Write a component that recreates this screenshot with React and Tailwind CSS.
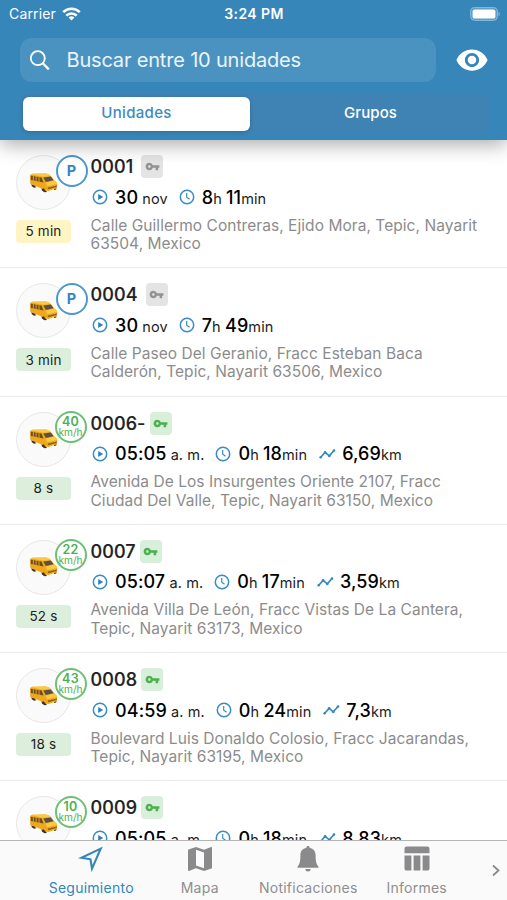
import {
  MdVpnKey,
  MdMap,
  MdVisibility,
} from "react-icons/md";

const units = [
  {
    name: "0001",
    age: "5 min",
    stale: true,
    start: ["30", " nov"],
    hours: "8",
    minutes: "11",
    address: ["Calle Guillermo Contreras, Ejido Mora, Tepic, Nayarit", "63504, Mexico"],
  },
  {
    name: "0004",
    age: "3 min",
    start: ["30", " nov"],
    hours: "7",
    minutes: "49",
    address: ["Calle Paseo Del Geranio, Fracc Esteban Baca", "Calderón, Tepic, Nayarit 63506, Mexico"],
  },
  {
    name: "0006-",
    age: "8 s",
    speed: 40,
    start: ["05:05", " a. m."],
    hours: "0",
    minutes: "18",
    distance: "6,69",
    address: ["Avenida De Los Insurgentes Oriente 2107, Fracc", "Ciudad Del Valle, Tepic, Nayarit 63150, Mexico"],
  },
  {
    name: "0007",
    age: "52 s",
    speed: 22,
    start: ["05:07", " a. m."],
    hours: "0",
    minutes: "17",
    distance: "3,59",
    address: ["Avenida Villa De León, Fracc Vistas De La Cantera,", "Tepic, Nayarit 63173, Mexico"],
  },
  {
    name: "0008",
    age: "18 s",
    speed: 43,
    start: ["04:59", " a. m."],
    hours: "0",
    minutes: "24",
    distance: "7,3",
    address: ["Boulevard Luis Donaldo Colosio, Fracc Jacarandas,", "Tepic, Nayarit 63195, Mexico"],
  },
  {
    name: "0009",
    speed: 10,
    start: ["05:05", " a. m."],
    hours: "0",
    minutes: "18",
    distance: "8,83",
  },
];

function WifiIcon() {
  return (
    <svg width="19" height="14" viewBox="0 0 19 14" fill="none" stroke="white" strokeWidth="2.6">
      <path d="M1.2 5.2a11.8 11.8 0 0 1 16.6 0" />
      <path d="M4.3 8.6a7.4 7.4 0 0 1 10.4 0" />
      <path d="M9.5 13.6 6.6 10.6a4.2 4.2 0 0 1 5.8 0z" fill="white" stroke="none" />
    </svg>
  );
}

function BatteryIcon() {
  return (
    <svg width="31" height="14" viewBox="0 0 31 14" fill="none">
      <rect x="0.6" y="0.6" width="26.8" height="12.8" rx="4" fill="#5a9dc8" stroke="#8bbbd9" />
      <rect x="2.6" y="2.4" width="22.8" height="9.2" rx="2.2" fill="white" />
      <path d="M28.6 4.8v4.4c1.6-.8 1.6-3.6 0-4.4z" fill="#8bbbd9" />
    </svg>
  );
}

function SearchIcon() {
  return (
    <svg width="21" height="21" viewBox="0 0 21 21" fill="none" stroke="white" strokeWidth="1.8">
      <circle cx="8.8" cy="8.2" r="7" />
      <path d="M13.8 13.2 19.8 19.4" strokeWidth="2.3" />
    </svg>
  );
}

function VanIcon() {
  return (
    <svg width="30" height="22" viewBox="0 0 30 22">
      <path d="M2.4 12l4 1.4.4 2-1.600.3-2.400-1.500zM12.500 16l4 1.500 1.400 2.400-2.200.4-2.800-1.900zM25 16l2.600-.8-.4 2.400-2 .5z" fill="#3b3129" />
      <path d="M1 3.600Q1.200 2 3.200 1.700L17 1.500Q20.500 1.900 22.800 5L25.200 8.300Q28 9.800 28.200 12L27.800 16.200 19.500 19 14.800 18.200 12.800 16.600 6.300 14.100 1.200 11.700z" fill="#f0a91c" />
      <path d="M2.200 2.300Q2.600 1.800 4 1.700L17 1.500Q19.800 1.700 21.800 4L13.800 4.800z" fill="#fbc83f" />
      <path d="M16.700 10.400 25.300 8.600Q28 10 28.100 12L18.200 14.200z" fill="#fdca3a" />
      <path d="M1.900 3.700 12.600 5.400 14.500 10.600 1.900 8z" fill="#6b4d22" />
      <path d="M14.300 5.500 21.800 4.600 24.500 8.200 16.800 9.900z" fill="#5a5048" />
      <path d="M4.300 3.500v5.400M7.100 4v5.600M10 4.400v5.800" stroke="#e6a11e" strokeWidth="1" />
      <path d="M18.800 15.600 27.800 13.500v1.500L19 17.200z" fill="#8d6420" />
      <path d="M13.700 16.200q1.700-.2 2.200 1.800l-.3 1.800q-1.500 0-2.200-1.800z" fill="#3b3129" />
    </svg>
  );
}

function PlayIcon() {
  return (
    <svg className="mr-[7px] shrink-0" width="16" height="16" viewBox="0 0 16 16" fill="none">
      <circle cx="8" cy="8" r="6.700" stroke="#3a8cc4" strokeWidth="1.5" />
      <path d="M6.200 4.900v6.200L11.200 8z" fill="#2f80bb" />
    </svg>
  );
}

function ClockIcon() {
  return (
    <svg className="mr-[7px] shrink-0" width="16" height="16" viewBox="0 0 16 16" fill="none" stroke="#3a8cc4">
      <circle cx="8" cy="8" r="6.700" strokeWidth="1.5" />
      <path d="M7.700 4.100v4.200l2.900 2" strokeWidth="1.200" />
    </svg>
  );
}

function TrendIcon() {
  return (
    <svg className="mr-[6px] shrink-0" width="17" height="12" viewBox="0 0 17 12" fill="#3486c0">
      <path d="M1.700 9.300 6.100 4.400 10.300 7.900 15 2.500" fill="none" stroke="#3486c0" strokeWidth="1.600" />
      <circle cx="1.700" cy="9.300" r="1.300" />
      <circle cx="6.100" cy="4.300" r="1.300" />
      <circle cx="10.300" cy="8" r="1.300" />
      <circle cx="15" cy="2.500" r="1.300" />
    </svg>
  );
}

function SendIcon() {
  return (
    <svg width="26" height="26" viewBox="0 0 26 26" fill="none" stroke="#3486ba" strokeWidth="2.100">
      <path d="M22.700 2.600 3.400 11.800l9.100 1.500 1.500 9.300z" />
    </svg>
  );
}

function BellIcon() {
  return (
    <svg width="26" height="26" viewBox="0 0 26 26" fill="#8a8a8d">
      <path d="M13 0c1 0 1.500.7 1.600 1.700 3.800.8 6 3.600 6 7.500 0 5 .4 8.900 2.900 11.500v1H2.500v-1c2.500-2.600 2.900-6.500 2.900-11.500 0-3.900 2.200-6.700 6-7.500C11.500.7 12 0 13 0z" />
      <path d="M10.400 22.900h5.200a2.600 2.500 0 0 1-5.200 0z" />
    </svg>
  );
}

function TableIcon() {
  return (
    <svg width="26" height="26" viewBox="0 0 26 26" fill="#8a8a8d">
      <path d="M2.700.6h20.600q2.200 0 2.200 2.200v4.400H.5V2.800Q.5.600 2.700.6zM.5 9.600h6.900v15H2.700q-2.200 0-2.200-2.200zM9.600 9.600h6.800v15H9.600zM18.600 9.600h6.900v12.800q0 2.200-2.200 2.200h-4.700z" />
    </svg>
  );
}

function UnitRow({ unit }) {
  const moving = unit.speed !== undefined;

  return (
    <li className="flex h-[128.25px] border-b border-[#e9e9e9] pl-4">
      <div className="relative w-[74.500px] shrink-0 pt-[15px]">
        <div className="flex size-[55px] items-center justify-center rounded-full border border-[#e7e7e7] bg-[#fafafa]">
          <VanIcon />
        </div>

        {moving ? (
          <div className="absolute top-[14.500px] left-[38.500px] flex size-[32px] flex-col items-center justify-center rounded-full border-2 border-[#6cc072] bg-white text-[#4caf50]">
            <span className="text-[12.500px] leading-[11px] font-semibold tracking-[0.3px]">{unit.speed}</span>
            <span className="text-[10.200px] leading-[11px]">km/h</span>
          </div>
        ) : (
          <div className="absolute top-[14.500px] left-[39.500px] flex size-[32px] items-center justify-center rounded-full border-2 border-[#4f98cb] bg-white text-[14.500px] font-bold text-[#3486c0]">
            P
          </div>
        )}

        {unit.age && (
          <div
            className={`mt-[10px] flex h-[23px] w-[55px] items-center justify-center rounded-[4px] text-[13.500px] tracking-[0.2px] text-[#222] ${
              unit.stale ? "bg-[#fff5c4]" : "bg-[#dcefdc]"
            }`}
          >
            {unit.age}
          </div>
        )}
      </div>

      <div className="min-w-0 flex-1 pt-[15px] whitespace-nowrap">
        <div className="flex h-[23px] items-center">
          <span className="text-[18px] font-medium tracking-[0.1px] text-[#222] [-webkit-text-stroke:0.2px_#222]">
            {unit.name}
          </span>
          <span
            className={`flex h-[23px] w-[22px] items-center justify-center rounded-[4px] ${
              moving ? "ml-[4px] bg-[#d8efd9] text-[#4caf50]" : "ml-[8px] bg-[#e4e4e4] text-[#929292]"
            }`}
          >
            <MdVpnKey size={15} />
          </span>
        </div>

        <div className="mt-[8px] flex h-[22px] items-center pl-[1.500px] text-[14.500px] tracking-[0.1px] text-[#1c1c1c]">
          <PlayIcon />
          <span className="mr-[11px] whitespace-pre">
            <b className="text-[18px] font-medium text-black">{unit.start[0]}</b>
            {unit.start[1]}
          </span>
          <ClockIcon />
          <span className="mr-[12px]">
            <b className="text-[18px] font-medium text-black">{unit.hours}</b>h{" "}
            <b className="text-[18px] font-medium text-black">{unit.minutes}</b>min
          </span>
          {unit.distance && (
            <>
              <TrendIcon />
              <span>
                <b className="text-[18px] font-medium text-black">{unit.distance}</b>km
              </span>
            </>
          )}
        </div>

        {unit.address && (
          <p className="mt-[8.500px] text-[15.500px] leading-[18.500px] tracking-[0.05px] text-[#8c8c8c]">
            {unit.address[0]}
            <br />
            {unit.address[1]}
          </p>
        )}
      </div>
    </li>
  );
}

function Tab({ label, active, children }) {
  return (
    <div
      className={`flex w-[108.500px] flex-col items-center pt-[5px] text-[14px] tracking-[0.25px] ${
        active ? "text-[#3486ba]" : "text-[#8e8e90]"
      }`}
    >
      <div className="flex h-[26px] items-center justify-center">{children}</div>
      <span className="mt-[5px] leading-[22px]">{label}</span>
    </div>
  );
}

function App() {
  return (
    <div className="flex h-[900px] w-[507px] flex-col overflow-hidden bg-white font-['Inter','Liberation_Sans',sans-serif]">
      <header className="z-10 h-[140px] shrink-0 bg-[#3686ba] text-white shadow-[0_5px_18px_rgba(0,0,0,0.32)]">
        <div className="grid h-[27px] grid-cols-3 items-center pr-[6px] pl-[9px] text-[14px]">
          <div className="flex items-center gap-[6px]">
            <span className="tracking-[0.15px]">Carrier</span>
            <WifiIcon />
          </div>
          <span className="pr-[2px] text-center font-semibold tracking-[0.4px]">3:24 PM</span>
          <div className="flex justify-end">
            <BatteryIcon />
          </div>
        </div>

        <div className="mt-[11px] flex items-center pl-5">
          <div className="flex h-[44px] w-[416px] items-center rounded-[12px] bg-[#4a93c1] pl-[9px]">
            <SearchIcon />
            <span className="ml-[16.500px] text-[20px] tracking-[-0.18px] text-[#eaf4fb]">
              Buscar entre 10 unidades
            </span>
          </div>
          <MdVisibility size={34} className="ml-[18.500px]" />
        </div>

        <div className="mt-[12px] ml-[21px] flex h-[39px] w-[468px] items-center rounded-[8px] bg-[#3f83b4] pl-[2px] text-[15px]">
          <div className="flex h-[34px] w-[227px] items-center justify-center rounded-[6px] bg-white font-medium tracking-[0.3px] text-[#3d8bbf] shadow-[0_1px_4px_rgba(0,0,0,0.2)]">
            Unidades
          </div>
          <div className="flex flex-1 items-center justify-center pl-[2px] font-medium tracking-[0.1px]">
            Grupos
          </div>
        </div>
      </header>

      <main className="min-h-0 flex-1 overflow-hidden">
        <ul>
          {units.map((unit) => (
            <UnitRow key={unit.name} unit={unit} />
          ))}
        </ul>
      </main>

      <nav className="flex h-[60px] shrink-0 border-t border-[#b4b4b4] bg-[#fafafa] pl-[37px]">
        <Tab label="Seguimiento" active>
          <SendIcon />
        </Tab>
        <Tab label="Mapa">
          <MdMap size={32} className="text-[#8a8a8d]" />
        </Tab>
        <Tab label="Notificaciones">
          <BellIcon />
        </Tab>
        <Tab label="Informes">
          <TableIcon />
        </Tab>
        <svg className="mt-[23px] ml-[20px]" width="10" height="13" viewBox="0 0 10 13" fill="none" stroke="#8a8a8d" strokeWidth="1.800">
          <path d="M2 1.500 7.500 6.500 2 11.500" />
        </svg>
      </nav>
    </div>
  );
}

export default App;
